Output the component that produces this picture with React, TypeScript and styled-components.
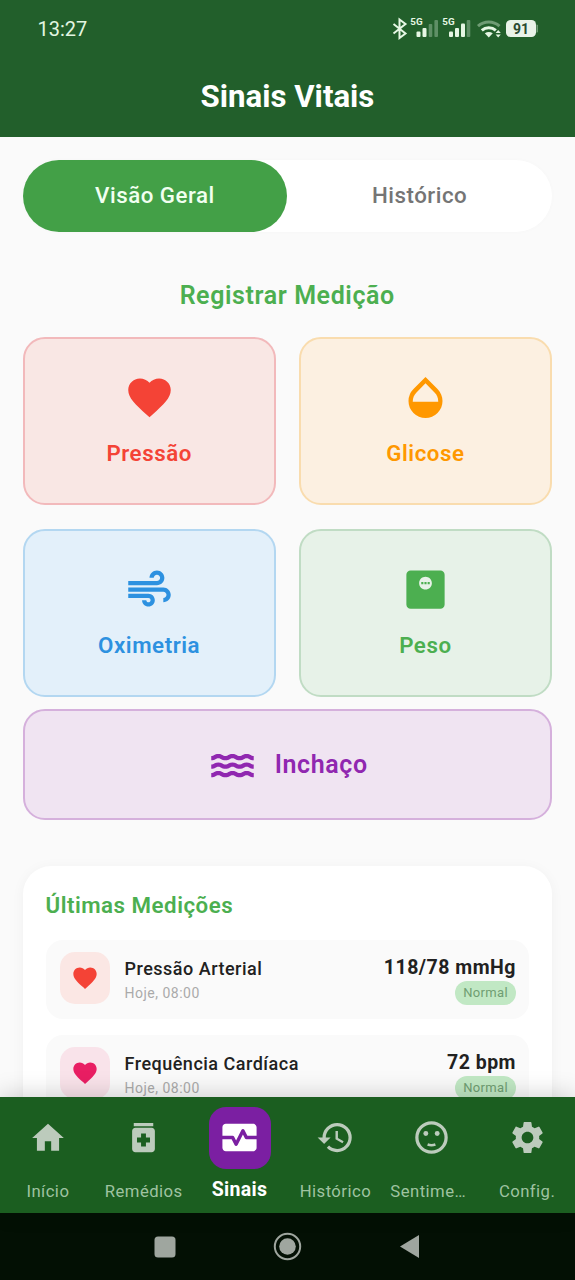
import React from "react";
import styled, { createGlobalStyle } from "styled-components";
import {
  MdFavorite,
  MdOpacity,
  MdAir,
  MdMonitorWeight,
  MdWater,
  MdHome,
  MdMedication,
  MdMonitorHeart,
  MdHistory,
  MdSettings,
} from "react-icons/md";

const GlobalStyle = createGlobalStyle`
  * { box-sizing: border-box; }
  body {
    margin: 0;
    background: #fafafa;
    font-family: Roboto, "Liberation Sans", sans-serif;
  }
  svg { display: block; flex: none; }
`;

const Screen = styled.div`
  width: 575px;
  height: 1280px;
  display: flex;
  flex-direction: column;
  overflow: hidden;
  background: #fafafa;
`;

const Header = styled.header`
  flex: none;
  height: 137px;
  background: #225f2b;
  color: #fff;
`;

const StatusBar = styled.div`
  height: 57px;
  padding: 0 37px 0 37.5px;
  display: flex;
  align-items: center;
  justify-content: space-between;
  color: #e3f6e1;
`;

const Clock = styled.span`
  font-size: 20px;
`;

const Title = styled.h1`
  margin: 0;
  height: 79px;
  line-height: 79px;
  text-align: center;
  font-size: 31.2px;
  font-weight: 700;
`;

const Content = styled.main`
  flex: 1;
  min-height: 0;
  overflow: hidden;
  padding: 22.5px 23px 0 22.5px;
  display: flex;
  flex-direction: column;
`;

const Tabs = styled.div`
  flex: none;
  height: 72px;
  display: flex;
  border-radius: 36px;
  background: #fff;
  box-shadow: 0 0 5px rgba(0, 0, 0, 0.02);
`;

const Tab = styled.div<{ $active?: boolean }>`
  flex: 1;
  display: flex;
  align-items: center;
  justify-content: center;
  padding-bottom: 1px;
  border-radius: 36px;
  font-size: 22.3px;
  font-weight: 500;
  letter-spacing: 0.5px;
  background: ${(p) => (p.$active ? "#43a047" : "transparent")};
  color: ${(p) => (p.$active ? "#f1fff0" : "#757575")};
`;

const SectionTitle = styled.h2`
  flex: none;
  margin: 47.5px 0 23.5px;
  height: 34px;
  line-height: 34px;
  text-align: center;
  font-size: 25px;
  font-weight: 600;
  letter-spacing: 0.6px;
  color: #4caf50;
`;

const Grid = styled.div`
  flex: none;
  display: grid;
  grid-template-columns: 1fr 1fr;
  grid-auto-rows: 168.5px;
  gap: 23.5px 23px;
`;

const MeasureCard = styled.div<{ $color: string; $bg: string; $line: string; $wide?: boolean }>`
  flex: none;
  display: flex;
  flex-direction: ${(p) => (p.$wide ? "row" : "column")};
  align-items: center;
  justify-content: center;
  gap: ${(p) => (p.$wide ? "17px" : "16px")};
  height: ${(p) => (p.$wide ? "111px" : "auto")};
  margin-top: ${(p) => (p.$wide ? "12px" : "0")};
  padding-bottom: ${(p) => (p.$wide ? "0" : "2.5px")};
  border: 2px solid ${(p) => p.$line};
  border-radius: 22px;
  background: ${(p) => p.$bg};
  color: ${(p) => p.$color};
  font-size: ${(p) => (p.$wide ? "25px" : "22.3px")};
  font-weight: 600;
  letter-spacing: ${(p) => (p.$wide ? "0.6px" : "0.55px")};
  line-height: 28px;
`;

const LatestCard = styled.section`
  flex: none;
  margin-top: 46px;
  height: 330px;
  padding: 23px 23px 0 23px;
  border-radius: 28px;
  background: #fff;
  box-shadow: 0 2px 14px rgba(0, 0, 0, 0.045);
`;

const LatestTitle = styled.h3`
  margin: 0 0 19px;
  height: 32px;
  line-height: 32px;
  font-size: 22.3px;
  font-weight: 600;
  letter-spacing: 0.5px;
  color: #4caf50;
`;

const Reading = styled.div`
  height: 79px;
  margin-bottom: 16px;
  padding: 0 13px 3px 14px;
  display: flex;
  align-items: center;
  border-radius: 17px;
  background: #fafafa;
`;

const IconTile = styled.div<{ $bg: string; $color: string }>`
  width: 50px;
  height: 52px;
  margin-right: 15px;
  display: flex;
  align-items: center;
  justify-content: center;
  border-radius: 15px;
  background: ${(p) => p.$bg};
  color: ${(p) => p.$color};
`;

const ReadingText = styled.div`
  flex: 1;
  display: flex;
  flex-direction: column;
  padding-top: 3px;
`;

const Name = styled.span`
  font-size: 18px;
  font-weight: 500;
  line-height: 27px;
  letter-spacing: 0.5px;
  color: #212121;
`;

const When = styled.span`
  font-size: 14px;
  line-height: 22px;
  letter-spacing: 0.5px;
  color: #aaa;
`;

const ReadingValue = styled.div`
  display: flex;
  flex-direction: column;
  align-items: flex-end;
  padding-top: 3px;
`;

const Value = styled.span`
  font-size: 19.5px;
  font-weight: 700;
  line-height: 26px;
  letter-spacing: 0.5px;
  color: #212121;
`;

const Badge = styled.span`
  padding: 0 8px;
  height: 24px;
  line-height: 24px;
  border-radius: 12px;
  font-size: 13px;
  letter-spacing: 0.35px;
  background: #c1e8c4;
  color: #6f9e72;
`;

const BottomNav = styled.nav`
  flex: none;
  position: relative;
  height: 116px;
  display: grid;
  grid-template-columns: repeat(6, 1fr);
  background: #1b5e20;
  box-shadow: 0 -3px 22px rgba(0, 0, 0, 0.17);
`;

const NavItem = styled.div<{ $active?: boolean }>`
  display: flex;
  flex-direction: column;
  align-items: center;
  min-width: 0;
  padding: 9.5px 7px 0;
  color: ${(p) => (p.$active ? "#fff" : "#bccbbc")};
`;

const NavIcon = styled.div<{ $active?: boolean }>`
  width: 62px;
  height: 62px;
  display: flex;
  align-items: center;
  justify-content: center;
  border-radius: 17px;
  background: ${(p) => (p.$active ? "#7b1fa2" : "transparent")};
`;

const NavLabel = styled.span<{ $active?: boolean; $clipped?: boolean }>`
  align-self: ${(p) => (p.$clipped ? "flex-start" : "center")};
  margin-top: ${(p) => (p.$active ? "9px" : "11px")};
  white-space: nowrap;
  line-height: 23px;
  font-size: ${(p) => (p.$active ? "19.5px" : "16.7px")};
  font-weight: ${(p) => (p.$active ? 700 : 400)};
  letter-spacing: ${(p) => (p.$active ? "0.35px" : "0.45px")};
  color: ${(p) => (p.$active ? "#fff" : "#9fc3a0")};
`;

const SystemNav = styled.div`
  flex: none;
  height: 67px;
  background: #031004;
`;

function StatusIcons() {
  return (
    <svg width="148" height="30" viewBox="390 14 148 30">
      <path d="M393.5 24l12 9.500-6 4.500V19.500l6 4.500-12 9.500" fill="none" stroke="#e6f7e4" strokeWidth="2" />
      <g fontFamily="Roboto, sans-serif" fontSize="9.8" fontWeight="700" fill="#e6f7e4">
        <text x="410.3" y="25.2">5G</text>
        <text x="442.3" y="25.2">5G</text>
      </g>
      <g fill="#e6f7e4">
        <rect x="416.5" y="31.5" width="4" height="5.5" rx="1" />
        <rect x="422.5" y="28" width="4" height="9" rx="1" />
        <rect x="449" y="31.5" width="4" height="5.5" rx="1" />
        <rect x="455" y="28" width="4" height="9" rx="1" />
        <rect x="461" y="23.5" width="4" height="13.5" rx="1" />
      </g>
      <g fill="#5f8f66">
        <rect x="428.7" y="24" width="3.6" height="13" rx="1" />
        <rect x="434.4" y="20" width="3.6" height="17" rx="1" />
        <rect x="466.7" y="20" width="3.6" height="17" rx="1" />
      </g>
      <path d="M478 26.2a16 16 0 0 1 21.5 0" fill="none" stroke="#6f9c74" strokeWidth="3" />
      <path d="M481.8 30.4a10.5 10.5 0 0 1 14 0" fill="none" stroke="#e6f7e4" strokeWidth="3" />
      <path d="M484.8 33.2q4-2.6 8 0l-4 4.2z" fill="#e6f7e4" />
      <path d="M498.2 30l2.6 3h-5.2zM498.2 37.6l2.6-3h-5.2z" fill="#e6f7e4" />
      <path d="M536.4 24.5q2.6 0 2.6 4t-2.6 4z" fill="#6f9c74" />
      <rect x="506" y="20" width="30" height="17" rx="4.5" fill="#e9f3e8" />
      <text x="521" y="33.7" textAnchor="middle" fontFamily="Roboto, sans-serif" fontSize="14" fontWeight="700" fill="#2a4a30">
        91
      </text>
    </svg>
  );
}

function FaceIcon({ size }: { size: number }) {
  return (
    <svg width={size} height={size} viewBox="0 0 24 24" fill="none" stroke="currentColor">
      <circle cx="15.5" cy="9.5" r="1.5" fill="currentColor" stroke="none" />
      <circle cx="8.5" cy="9.5" r="1.5" fill="currentColor" stroke="none" />
      <path d="M9.600 16.300q2.400.9 4.800 0" strokeWidth="1.500" />
      <circle cx="12" cy="12" r="9" strokeWidth="2" />
    </svg>
  );
}

const measures = [
  { label: "Pressão", icon: <MdFavorite size={51} />, color: "#f44336", bg: "#f9e7e4", line: "#f2b9bb" },
  { label: "Glicose", icon: <MdOpacity size={51} />, color: "#ff9800", bg: "#fcf0e1", line: "#f9dcae" },
  { label: "Oximetria", icon: <MdAir size={51} />, color: "#2d91e0", bg: "#e3f0fa", line: "#b3d7f1" },
  { label: "Peso", icon: <MdMonitorWeight size={51} />, color: "#4caf50", bg: "#e7f2e8", line: "#c0dcc4" },
];

const readings = [
  { name: "Pressão Arterial", value: "118/78 mmHg", color: "#f44336", bg: "#fbe7e4" },
  { name: "Frequência Cardíaca", value: "72 bpm", color: "#e91e63", bg: "#f9e3ea" },
];

const navItems = [
  { label: "Início", icon: <MdHome size={38} /> },
  { label: "Remédios", icon: <MdMedication size={39} /> },
  { label: "Sinais", icon: <MdMonitorHeart size={41} />, active: true },
  { label: "Histórico", icon: <MdHistory size={39} /> },
  { label: "Sentime…", icon: <FaceIcon size={39} />, clipped: true },
  { label: "Config.", icon: <MdSettings size={39} /> },
];

export default function App() {
  return (
    <Screen>
      <GlobalStyle />
      <Header>
        <StatusBar>
          <Clock>13:27</Clock>
          <StatusIcons />
        </StatusBar>
        <Title>Sinais Vitais</Title>
      </Header>
      <Content>
        <Tabs>
          <Tab $active>Visão Geral</Tab>
          <Tab>Histórico</Tab>
        </Tabs>
        <SectionTitle>Registrar Medição</SectionTitle>
        <Grid>
          {measures.map((m) => (
            <MeasureCard key={m.label} $color={m.color} $bg={m.bg} $line={m.line}>
              {m.icon}
              <span>{m.label}</span>
            </MeasureCard>
          ))}
        </Grid>
        <MeasureCard $wide $color="#9027b0" $bg="#f0e4f2" $line="#d5b0dc">
          <MdWater size={51} />
          <span>Inchaço</span>
        </MeasureCard>
        <LatestCard>
          <LatestTitle>Últimas Medições</LatestTitle>
          {readings.map((r) => (
            <Reading key={r.name}>
              <IconTile $bg={r.bg} $color={r.color}>
                <MdFavorite size={28} />
              </IconTile>
              <ReadingText>
                <Name>{r.name}</Name>
                <When>Hoje, 08:00</When>
              </ReadingText>
              <ReadingValue>
                <Value>{r.value}</Value>
                <Badge>Normal</Badge>
              </ReadingValue>
            </Reading>
          ))}
        </LatestCard>
      </Content>
      <BottomNav>
        {navItems.map((n) => (
          <NavItem key={n.label} $active={n.active}>
            <NavIcon $active={n.active}>{n.icon}</NavIcon>
            <NavLabel $active={n.active} $clipped={n.clipped}>
              {n.label}
            </NavLabel>
          </NavItem>
        ))}
      </BottomNav>
      <SystemNav>
        <svg width="575" height="67" viewBox="0 0 575 67" fill="#9fa69f">
          <rect x="154.500" y="23.500" width="21" height="21" rx="3.500" />
          <circle cx="287.500" cy="33.500" r="12.700" fill="none" stroke="#9fa69f" strokeWidth="2" />
          <circle cx="287.500" cy="33.500" r="8.300" />
          <path d="M419 22v23l-19-11.500z" />
        </svg>
      </SystemNav>
    </Screen>
  );
}
